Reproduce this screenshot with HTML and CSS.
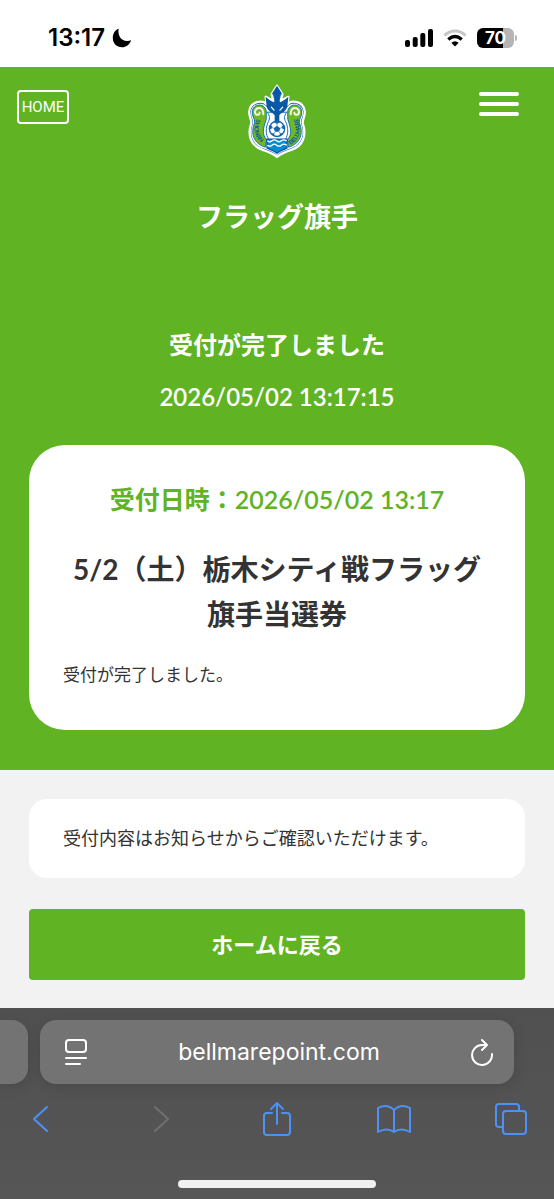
FILE: index.html
```html
<!DOCTYPE html>
<html lang="ja">
<head>
<meta charset="utf-8">
<meta name="viewport" content="width=device-width, initial-scale=1">
<title>フラッグ旗手</title>
<link rel="stylesheet" href="styles.css">
</head>
<body>
<div class="status">
  <div class="status-time">
    <time>13:17</time>
    <svg width="20" height="20" viewBox="0 0 20 20" aria-hidden="true"><path d="M6.600.800C5.500 8 9.500 15.200 19.200 12.300C17.500 17 14 19.300 10 19.300C4.700 19.300.800 15.300.800 10C.800 5.500 3.200 2 6.600.800Z" fill="#000"/></svg>
  </div>
  <div class="status-icons">
    <svg width="28" height="18" viewBox="0 0 28 18" aria-hidden="true"><rect x="0" y="11" width="5" height="7" rx="2"/><rect x="7.700" y="8" width="5" height="10" rx="2"/><rect x="15.300" y="4" width="5" height="14" rx="2"/><rect x="23" y="0" width="5" height="18" rx="2"/></svg>
    <svg width="24" height="18" viewBox="0 0 24 18" fill="none" aria-hidden="true"><path d="M1.500 6.500C7.500.500 16.500.500 22.500 6.500" stroke="#c6c6c6" stroke-width="3"/><path d="M5.300 10.500Q12 4.600 18.700 10.500" stroke="#000" stroke-width="3.300"/><path d="M8.300 13.800Q12 10.700 15.700 13.800L12 17.500Z" fill="#000"/></svg>
    <div class="battery"><span class="battery-level">70</span></div>
  </div>
</div>

<main>
  <section class="hero">
    <header class="site-header">
      <a class="home" href="#">HOME</a>
      <svg class="crest" width="60" height="77" viewBox="30 20 180 230" role="img" aria-label="SHONAN BELLMARE">
        <g stroke-linejoin="round" stroke-linecap="round">
          <path d="M120 28L104 53L109 73L86 61L89 84C77 69 41 74 37 103C35 119 44 128 43 140C31 174 40 208 77 220C92 225 109 232 120 241C131 232 148 225 163 220C200 208 209 174 197 140C196 128 205 119 203 103C199 74 163 69 151 84L154 61L131 73L136 53Z" fill="#1264ad" stroke="#fff" stroke-width="7"/>
          <path d="M90 92C78 74 46 80 42 104C40 120 50 128 48 141C35 174 46 205 80 216C95 221 110 227 120 236C130 227 145 221 160 216C194 205 205 174 192 141C190 128 200 120 198 104C194 80 162 74 150 92L136 112H104Z" fill="#fff"/>
          <path d="M88 112C91 78 50 79 46 103C43 118 55 126 53 139C39 171 51 202 85 212L89 190C75 175 77 158 87 131Z" fill="#6fb927" stroke="#1473b7" stroke-width="3"/>
          <path d="M152 112C149 78 190 79 194 103C197 118 185 126 187 139C201 171 189 202 155 212L151 190C165 175 163 158 153 131Z" fill="#6fb927" stroke="#1473b7" stroke-width="3"/>
          <path d="M79 113C79 90 57 89 54 105C53 116 66 119 68 109M161 113C161 90 183 89 186 105C187 116 174 119 172 109" fill="none" stroke="#f3fae0" stroke-width="6"/>
          <path d="M91 108C101 119 98 129 92 140C84 163 88 181 98 192H142C152 181 156 163 148 140C142 129 139 119 149 108Z" fill="#fff" stroke="#1473b7" stroke-width="3"/>
          <path d="M120 28L104 53H113V82L105 77L86 61L89 91C95 107 108 109 113 116V136H127V116C132 109 145 107 151 91L154 61L135 77L127 82V53H136Z" fill="#0759a7"/>
          <path d="M103 92L111 101M137 92L129 101" stroke="#fff" stroke-width="4"/>
        </g>
        <circle cx="120" cy="157" r="23" fill="#fff" stroke="#1264ad" stroke-width="4"/>
        <path d="M120 148L130 155L126 166H114L110 155ZM110 137L120 142L130 137L126 134H114ZM99 147L106 148L103 158L97 157ZM134 148L141 147L143 157L137 158ZM103 170L110 170L114 178L108 177ZM130 170L137 170L132 177L126 178Z" fill="#1264ad"/>
        <path d="M120 140V148M130 155L137 152M126 166L131 173M114 166L109 173M110 155L103 152" stroke="#1264ad" stroke-width="2"/>
        <path d="M90 188H150V214C142 219 130 222 120 230C110 222 98 219 90 214Z" fill="#078bd0" stroke="#0755a5" stroke-width="4"/>
        <path d="M91 193Q98 199 105 193T119 193T133 193T149 193M91 206Q98 212 105 206T119 206T133 206T149 206" fill="none" stroke="#fff" stroke-width="4"/>
        <path id="crest-left" d="M60 124C45 155 50 188 84 207" fill="none"/>
        <path id="crest-right" d="M157 208C192 186 195 156 180 119" fill="none"/>
        <g class="crest-text"><text><textPath href="#crest-left" startOffset="4">SHONAN</textPath></text><text><textPath href="#crest-right" startOffset="4">BELLMARE</textPath></text></g>
      </svg>
      <button class="menu" type="button" aria-label="メニュー"><span></span><span></span><span></span></button>
    </header>
    <h1 class="page-title">フラッグ旗手</h1>
    <div class="result">
      <p>受付が完了しました</p>
      <p><time>2026/05/02 13:17:15</time></p>
    </div>
    <article class="ticket">
      <p class="ticket-time">受付日時：2026/05/02 13:17</p>
      <h2 class="ticket-title">5/2（土）栃木シティ戦フラッグ旗手当選券</h2>
      <p class="ticket-text">受付が完了しました。</p>
    </article>
  </section>
  <section class="actions">
    <p class="notice">受付内容はお知らせからご確認いただけます。</p>
    <button class="back" type="button">ホームに戻る</button>
  </section>
</main>

<footer class="browser">
  <div class="address-row">
    <div class="tab-edge"></div>
    <div class="address">
      <button type="button" aria-label="ページメニュー"><svg width="24" height="28" viewBox="0 0 24 28" fill="none" stroke="#fff" stroke-width="2" stroke-linecap="round"><rect x="2" y="2" width="20" height="12" rx="3"/><path d="M2 20H22M2 26H16"/></svg></button>
      <span class="domain">bellmarepoint.com</span>
      <button type="button" aria-label="再読み込み"><svg width="24" height="28" viewBox="0 0 24 28" fill="none" stroke="#fff" stroke-width="2" stroke-linecap="round" stroke-linejoin="round"><path d="M17 7H12A10 10 0 1 0 22 16M12 2L17 7L12 12"/></svg></button>
    </div>
  </div>
  <nav class="toolbar" aria-label="ブラウザ">
    <button type="button" aria-label="戻る"><svg width="34" height="36" viewBox="0 0 34 36"><path d="M21 6L8 18L21 30"/></svg></button>
    <button class="disabled" type="button" aria-label="進む" disabled><svg width="34" height="36" viewBox="0 0 34 36"><path d="M12 6L25 18L12 30"/></svg></button>
    <button type="button" aria-label="共有"><svg width="34" height="36" viewBox="0 0 34 36"><path d="M12 12H7Q4 12 4 15V31Q4 34 7 34H27Q30 34 30 31V15Q30 12 27 12H22M17 23V2M11 8L17 2L23 8"/></svg></button>
    <button type="button" aria-label="ブックマーク"><svg width="34" height="36" viewBox="0 0 34 36"><path d="M17 9Q10 2 1 7V31Q10 26 17 31Q24 26 33 31V7Q24 2 17 9V31"/></svg></button>
    <button type="button" aria-label="タブ"><svg width="34" height="36" viewBox="0 0 34 36"><path d="M9 26H5Q2 26 2 23V6Q2 3 5 3H22Q25 3 25 6V10"/><rect x="9" y="10" width="23" height="23" rx="3"/></svg></button>
  </nav>
  <div class="home-indicator"></div>
</footer>
</body>
</html>
```
FILE: styles.css
```css
* {
  box-sizing: border-box;
}

body {
  margin: 0;
  min-height: 100vh;
  display: flex;
  flex-direction: column;
  background: #fff;
  color: #333;
  font-family: Lato, "Noto Sans CJK JP", sans-serif;
}

h1,
h2,
p {
  margin: 0;
}

button {
  margin: 0;
  padding: 0;
  border: 0;
  background: none;
  color: inherit;
  font: inherit;
}

svg {
  display: block;
  flex: none;
}

.status {
  display: flex;
  align-items: center;
  justify-content: space-between;
  height: 67px;
  padding: 8px 40px 0 48px;
  color: #000;
  font-family: Inter, sans-serif;
}

.status-time,
.status-icons {
  display: flex;
  align-items: center;
}

.status-time {
  gap: 7px;
  font-size: 24px;
  font-weight: 600;
}

.status-icons {
  gap: 10px;
}

.battery {
  position: relative;
  width: 37px;
  height: 20px;
  border-radius: 6px;
  background: linear-gradient(to right, #000 70%, #b5b5b5 70%);
}

.battery::after {
  content: "";
  position: absolute;
  top: 7px;
  right: -3px;
  width: 2px;
  height: 6px;
  border-radius: 0 2px 2px 0;
  background: #b5b5b5;
}

.battery-level {
  display: block;
  color: #fff;
  font-size: 17px;
  font-weight: 700;
  line-height: 20px;
  text-align: center;
}

.hero {
  padding: 16px 29px 40px;
  background: #60b323;
  color: #fff;
  text-align: center;
}

.site-header {
  display: grid;
  grid-template-columns: 1fr auto 1fr;
  align-items: start;
  margin: 0 -12px;
}

.home {
  display: flex;
  justify-content: center;
  justify-self: start;
  width: 52px;
  margin-top: 7px;
  border: 2px solid #fff;
  border-radius: 4px;
  color: #fff;
  font-family: Roboto, sans-serif;
  font-size: 15px;
  line-height: 30px;
  text-decoration: none;
}

.crest-text {
  fill: #0755a5;
  font: 700 18px Lato, sans-serif;
}

.menu {
  justify-self: end;
  display: grid;
  gap: 6px;
  width: 40px;
  margin: 9px 18px 0 0;
}

.menu span {
  height: 4px;
  border-radius: 2px;
  background: #fff;
}

.page-title {
  margin-top: 37px;
  font-size: 27px;
  font-weight: 600;
  line-height: 40px;
}

.result {
  display: grid;
  gap: 16px;
  margin-top: 90px;
  font-size: 24px;
  font-weight: 600;
  line-height: 36px;
}

.ticket {
  margin-top: 30px;
  padding: 34px 34px 40px;
  border-radius: 36px;
  background: #fff;
  color: #333;
}

.ticket-time {
  color: #60b323;
  font-size: 25px;
  font-weight: 600;
  line-height: 40px;
}

.ticket-title {
  margin-top: 28px;
  font-size: 28px;
  font-weight: 700;
  line-height: 45px;
}

.ticket-text {
  margin-top: 23px;
  font-size: 17px;
  line-height: 30px;
  text-align: left;
}

.actions {
  display: grid;
  gap: 31px;
  padding: 29px 29px 28px;
  background: #f2f2f2;
}

.notice {
  padding: 24px 34px;
  border-radius: 18px;
  background: #fff;
  font-size: 18px;
  line-height: 31px;
}

.back {
  padding: 18px;
  border-radius: 4px;
  background: #60b323;
  color: #fff;
  font-size: 22px;
  font-weight: 700;
  line-height: 35px;
}

.browser {
  flex: 1;
  padding-top: 12px;
  background: linear-gradient(#505050, #565656);
}

.address-row {
  display: flex;
  gap: 12px;
  padding-right: 40px;
}

.tab-edge,
.address {
  height: 64px;
  background: #737373;
  box-shadow: 0 3px 14px rgb(0 0 0 / 12%);
}

.tab-edge {
  width: 28px;
  border-radius: 0 16px 16px 0;
}

.address {
  flex: 1;
  display: flex;
  align-items: center;
  justify-content: space-between;
  padding: 0 20px 0 24px;
  border-radius: 16px;
  color: #fff;
  font-family: Inter, sans-serif;
  font-size: 23px;
}

.toolbar {
  display: flex;
  justify-content: space-between;
  margin-top: 17px;
  padding: 0 26px;
}

.toolbar svg {
  fill: none;
  stroke: #4c91f4;
  stroke-width: 2;
  stroke-linecap: round;
  stroke-linejoin: round;
}

.toolbar .disabled svg {
  stroke: #707070;
}

.home-indicator {
  width: 198px;
  height: 8px;
  margin: 43px auto 0;
  border-radius: 4px;
  background: #f0f0f0;
}
```
